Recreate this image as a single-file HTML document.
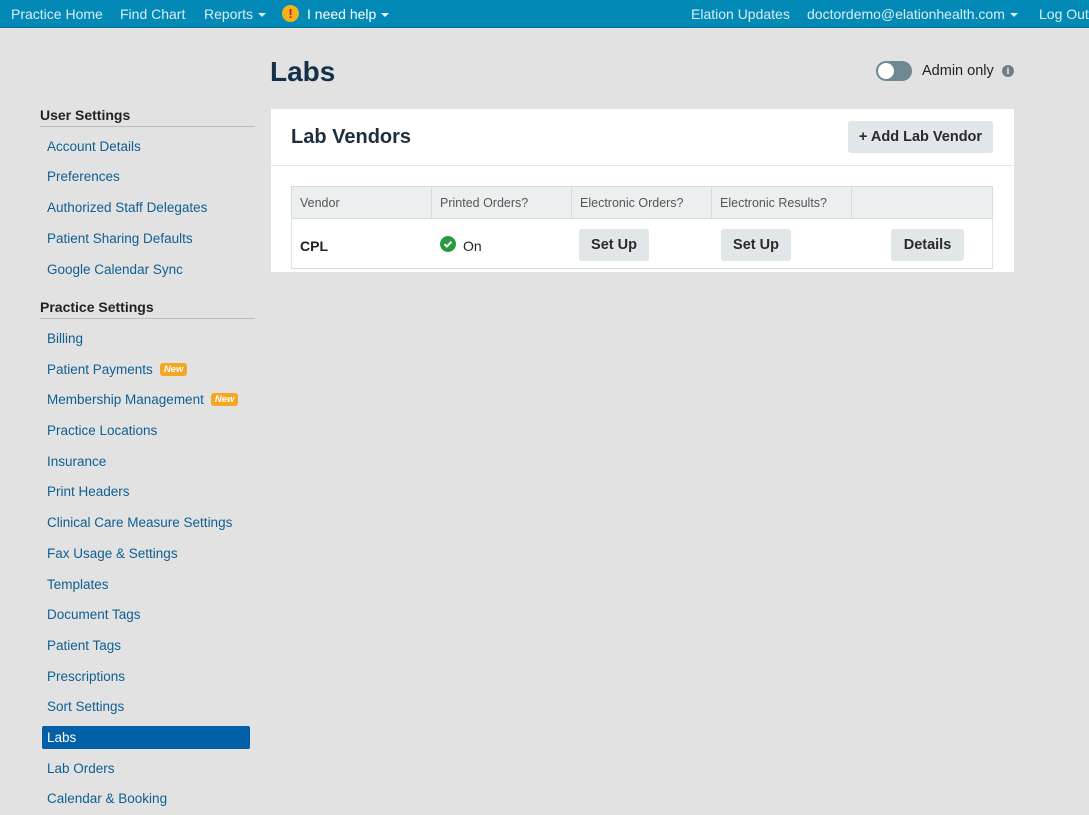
<!DOCTYPE html>
<html><head><style>
*{box-sizing:border-box;margin:0;padding:0}
body{width:1089px;height:815px;background:#e2e2e2;font-family:"Liberation Sans","DejaVu Sans",sans-serif;overflow:hidden;position:relative;color:#222}
.top{position:absolute;left:0;top:0;width:1089px;height:28px;background:#0289b5;border-bottom:1px solid #016f93;color:#d8eef6;font-size:14px}
.top span{position:absolute;top:6px;white-space:nowrap}
.car{display:inline-block;border-left:4px solid transparent;border-right:4px solid transparent;border-top:4px solid #d8eef6;vertical-align:middle;margin-left:5px}
.warn{position:absolute;left:282px;top:5px;width:17px;height:17px;border-radius:50%;background:#f5b21d;color:#b22;font-weight:bold;font-size:13px;text-align:center;line-height:17px}
.h{position:absolute;left:40px;font-size:14px;font-weight:bold;color:#222}
.hr{position:absolute;left:40px;width:215px;height:1px;background:#bdbdbd}
.l{position:absolute;left:47px;font-size:13.5px;color:#0f5f92;white-space:nowrap;margin-top:1px}
.new{display:inline-block;background:#f5a623;color:#fff;font-size:9.5px;font-style:italic;font-weight:bold;padding:1px 4px;border-radius:3px;margin-left:7px;vertical-align:2px}
.sel{position:absolute;left:42px;top:726px;width:208px;height:23px;background:#0160a8;border-radius:2px}
h1{position:absolute;left:270px;top:56px;font-size:28px;font-weight:bold;color:#14304b}
.card{position:absolute;left:271px;top:109px;width:743px;height:163px;background:#fff}
.btn{position:absolute;background:#e1e6e8;border-radius:3px;font-weight:bold;color:#2a2a2a;text-align:center}
.th{position:absolute;top:186px;height:33px;background:#eceff0;border-right:1px solid #d6dcde;border-top:1px solid #d6dcde;border-bottom:1px solid #d6dcde;font-size:12.5px;color:#555;padding:9px 8px}
</style></head><body>
<div class="top">
<span style="left:11px">Practice Home</span>
<span style="left:120px">Find Chart</span>
<span style="left:204px">Reports<i class="car"></i></span>
<div class="warn">!</div>
<span style="left:307px;color:#fff">I need help<i class="car" style="border-top-color:#fff"></i></span>
<span style="left:691px">Elation Updates</span>
<span style="left:807px">doctordemo@elationhealth.com<i class="car"></i></span>
<span style="left:1039px">Log Out</span>
</div>

<div class="h" style="top:107px">User Settings</div><div class="hr" style="top:126px"></div>
<div class="l" style="top:138px">Account Details</div>
<div class="l" style="top:168px">Preferences</div>
<div class="l" style="top:199px">Authorized Staff Delegates</div>
<div class="l" style="top:230px">Patient Sharing Defaults</div>
<div class="l" style="top:261px">Google Calendar Sync</div>
<div class="h" style="top:299px">Practice Settings</div><div class="hr" style="top:318px"></div>
<div class="l" style="top:330px">Billing</div>
<div class="l" style="top:361px">Patient Payments<span class="new">New</span></div>
<div class="l" style="top:391px">Membership Management<span class="new">New</span></div>
<div class="l" style="top:422px">Practice Locations</div>
<div class="l" style="top:453px">Insurance</div>
<div class="l" style="top:483px">Print Headers</div>
<div class="l" style="top:514px">Clinical Care Measure Settings</div>
<div class="l" style="top:545px">Fax Usage &amp; Settings</div>
<div class="l" style="top:576px">Templates</div>
<div class="l" style="top:606px">Document Tags</div>
<div class="l" style="top:637px">Patient Tags</div>
<div class="l" style="top:668px">Prescriptions</div>
<div class="l" style="top:698px">Sort Settings</div>
<div class="sel"></div>
<div class="l" style="top:729px;color:#fff">Labs</div>
<div class="l" style="top:760px">Lab Orders</div>
<div class="l" style="top:790px">Calendar &amp; Booking</div>

<h1>Labs</h1>
<div style="position:absolute;left:876px;top:61px;width:36px;height:20px;border-radius:10px;background:#6e8891"></div>
<div style="position:absolute;left:878px;top:63px;width:16px;height:16px;border-radius:50%;background:#fff"></div>
<div style="position:absolute;left:922px;top:63px;font-size:14.5px;color:#222">Admin only</div>
<div style="position:absolute;left:1002px;top:65px;width:12px;height:12px;border-radius:50%;background:#6e7f86;color:#fff;font-size:9px;font-weight:bold;text-align:center;line-height:12px">i</div>

<div class="card"></div>
<div style="position:absolute;left:291px;top:126px;font-size:20px;font-weight:bold;color:#1d2e3d">Lab Vendors</div>
<div class="btn" style="left:848px;top:121px;width:145px;height:32px;line-height:32px;font-size:14.5px">+ Add Lab Vendor</div>
<div style="position:absolute;left:271px;top:165px;width:743px;height:1px;background:#e2e6e8"></div>

<div class="th" style="left:291px;width:141px;border-left:1px solid #d6dcde">Vendor</div>
<div class="th" style="left:432px;width:140px">Printed Orders?</div>
<div class="th" style="left:572px;width:140px">Electronic Orders?</div>
<div class="th" style="left:712px;width:140px">Electronic Results?</div>
<div class="th" style="left:852px;width:141px"></div>
<div style="position:absolute;left:291px;top:219px;width:702px;height:50px;border-left:1px solid #e0e4e6;border-right:1px solid #e0e4e6;border-bottom:1px solid #d6dcde"></div>
<div style="position:absolute;left:300px;top:238px;font-size:14px;font-weight:bold">CPL</div>
<div style="position:absolute;left:440px;top:236px;width:16px;height:16px;border-radius:50%;background:#2a9a3e"><svg width="16" height="16"><path d="M4.5 8.2l2.4 2.3 4.6-4.8" stroke="#fff" stroke-width="2" fill="none"/></svg></div>
<div style="position:absolute;left:463px;top:238px;font-size:14px">On</div>
<div class="btn" style="left:579px;top:229px;width:70px;height:32px;line-height:33px;font-size:14.5px">Set Up</div>
<div class="btn" style="left:721px;top:229px;width:70px;height:32px;line-height:33px;font-size:14.5px">Set Up</div>
<div class="btn" style="left:891px;top:229px;width:73px;height:32px;line-height:33px;font-size:14.5px">Details</div>
</body></html>
